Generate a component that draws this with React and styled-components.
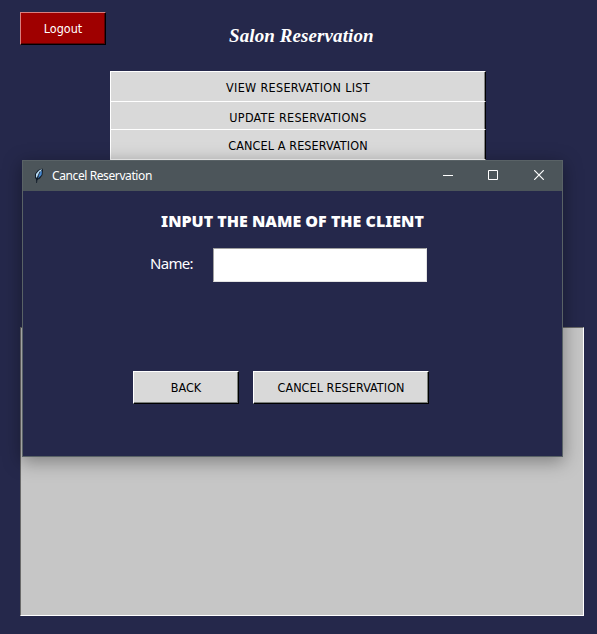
import React from "react";
import styled, { createGlobalStyle } from "styled-components";

const GlobalStyle = createGlobalStyle`
  * { box-sizing: border-box; }
  body { margin: 0; background: #25284b; overflow: hidden; }
  button, input { font: inherit; margin: 0; border-radius: 0; outline: none; }
`;

const Page = styled.main`
  position: relative;
  width: 597px;
  height: 634px;
  padding: 12px 13px 18px 20px;
  display: flex;
  flex-direction: column;
  background: #25284b;
  color: #fff;
  font-family: "Noto Sans", sans-serif;
`;

const Header = styled.header`
  display: flex;
  align-items: flex-start;
  height: 59px;
`;

const Title = styled.h1`
  margin: 11px 0 0 123px;
  font: italic 700 19px/25px "Z003", "URW Chancery L", "Liberation Serif", cursive;
  letter-spacing: 0.1px;
  white-space: nowrap;
`;

const RaisedButton = styled.button`
  flex: none;
  width: ${(p) => p.$width}px;
  height: 33px;
  padding: 1px 0 0;
  border: 1px solid;
  border-color: ${(p) => (p.$danger ? "#d97f7f #000 #000 #d97f7f" : "#fff #000 #000 #fff")};
  box-shadow: inset -1px -1px ${(p) => (p.$danger ? "#5c0000" : "#7b7f7b")};
  background: ${(p) => (p.$danger ? "#9f0000" : "#d9d9d9")};
  color: ${(p) => (p.$danger ? "#fff" : "#000")};
  font: 12.5px/16px "DejaVu Sans Condensed", "DejaVu Sans", sans-serif;
  font-stretch: condensed;
  letter-spacing: ${(p) => p.$spacing || 0}px;
  white-space: nowrap;
`;

const Menu = styled.nav`
  display: flex;
  flex-direction: column;
  width: 376px;
  height: 256px;
  margin-left: 90px;
`;

const MenuButton = styled(RaisedButton)`
  height: ${(p) => p.$height}px;
  padding: ${(p) => p.$top}px 0 0;
  border-bottom: 0;
  box-shadow: inset -1px 0 #858585;
  display: flex;
  justify-content: center;
  align-items: flex-start;
`;

const ListBox = styled.section`
  height: 289px;
  width: 564px;
  border: 1px solid;
  border-color: #696969 #fff #fff #696969;
  background: #c6c6c6;
`;

const Dialog = styled.section`
  position: absolute;
  left: 22px;
  top: 160px;
  width: 541px;
  height: 297px;
  border: 1px solid #596266;
  background: #25284b;
  box-shadow: 0 4px 17px 1px rgba(0, 0, 0, 0.35);
`;

const TitleBar = styled.div`
  height: 30px;
  display: flex;
  align-items: center;
  padding-left: 10px;
  background: #4c555a;
  font-size: 12px;
`;

const WindowName = styled.span`
  flex: 1;
  margin-left: 7px;
  padding-bottom: 2px;
  letter-spacing: -0.4px;
`;

const WindowControl = styled.button`
  width: 46px;
  height: 30px;
  padding: 0;
  border: 0;
  background: none;
  color: #fff;
  display: grid;
  place-items: center;
`;

const Controls = styled.div`
  display: flex;
  padding-bottom: 2px;
`;

const Prompt = styled.h2`
  margin: 19px 0 0;
  text-align: center;
  font: 900 16px/22px "Noto Sans", "Open Sans", sans-serif;
  white-space: nowrap;
`;

const Field = styled.label`
  display: flex;
  margin: 16px 0 0 127px;
  height: 34px;
`;

const FieldLabel = styled.span`
  width: 63px;
  font: 15px/31px "Noto Sans", sans-serif;
  letter-spacing: -0.7px;
`;

const NameInput = styled.input`
  width: 214px;
  height: 34px;
  padding: 4px;
  border: 1px solid;
  border-color: #a0a0a0 #e3e3e3 #e3e3e3 #a0a0a0;
  background: #fff;
`;

const Actions = styled.div`
  display: flex;
  gap: 14px;
  margin: 89px 0 0 110px;
`;

function Feather() {
  return (
    <svg width="12" height="16" viewBox="0 0 12 16" fill="none">
      <path d="M3.5 15 3 11 2 10V6L5 2 9.5.5 10 2 9.5 7 7 10.5 4 12Z" fill="#111c29" />
      <path d="M3 6 6 2.5 9 1 7 5 4 10 3 9Z" fill="#b9dcf5" />
      <path d="M9 2.5 8.5 7 5 10.5 6.5 5Z" fill="#4488d2" />
      <path d="M7 3.5 4.5 9 3.5 15" stroke="#111c29" strokeWidth=".8" />
    </svg>
  );
}

export default function App() {
  return (
    <>
      <GlobalStyle />
      <Page>
        <Header>
          <RaisedButton $width={86} $danger>Logout</RaisedButton>
          <Title>Salon Reservation</Title>
        </Header>
        <Menu>
          <MenuButton $width={376} $height={30} $top={8} $spacing={0.32}>VIEW RESERVATION LIST</MenuButton>
          <MenuButton $width={376} $height={28} $top={8} $spacing={0.27}>UPDATE RESERVATIONS</MenuButton>
          <MenuButton $width={376} $height={30} $top={8} $spacing={0.1}>CANCEL A RESERVATION</MenuButton>
          <MenuButton $width={376} $height={30} $top={8} aria-hidden="true" />
        </Menu>
        <ListBox />
        <Dialog>
          <TitleBar>
            <Feather />
            <WindowName>Cancel Reservation</WindowName>
            <Controls>
              <WindowControl aria-label="Minimize">
                <svg width="12" height="10"><path d="M2 5.5H12" stroke="#fff" /></svg>
              </WindowControl>
              <WindowControl aria-label="Maximize">
                <svg width="10" height="10"><path d="M.5.5h9v9h-9Z" stroke="#fff" fill="none" /></svg>
              </WindowControl>
              <WindowControl aria-label="Close">
                <svg width="10" height="10"><path d="m.2.2 9.6 9.6m0-9.6L.2 9.8" stroke="#fff" strokeWidth="1.2" /></svg>
              </WindowControl>
            </Controls>
          </TitleBar>
          <Prompt>INPUT THE NAME OF THE CLIENT</Prompt>
          <Field>
            <FieldLabel>Name:</FieldLabel>
            <NameInput aria-label="Name" />
          </Field>
          <Actions>
            <RaisedButton $width={106}>BACK</RaisedButton>
            <RaisedButton $width={176} $spacing={0.05}>CANCEL RESERVATION</RaisedButton>
          </Actions>
        </Dialog>
      </Page>
    </>
  );
}
